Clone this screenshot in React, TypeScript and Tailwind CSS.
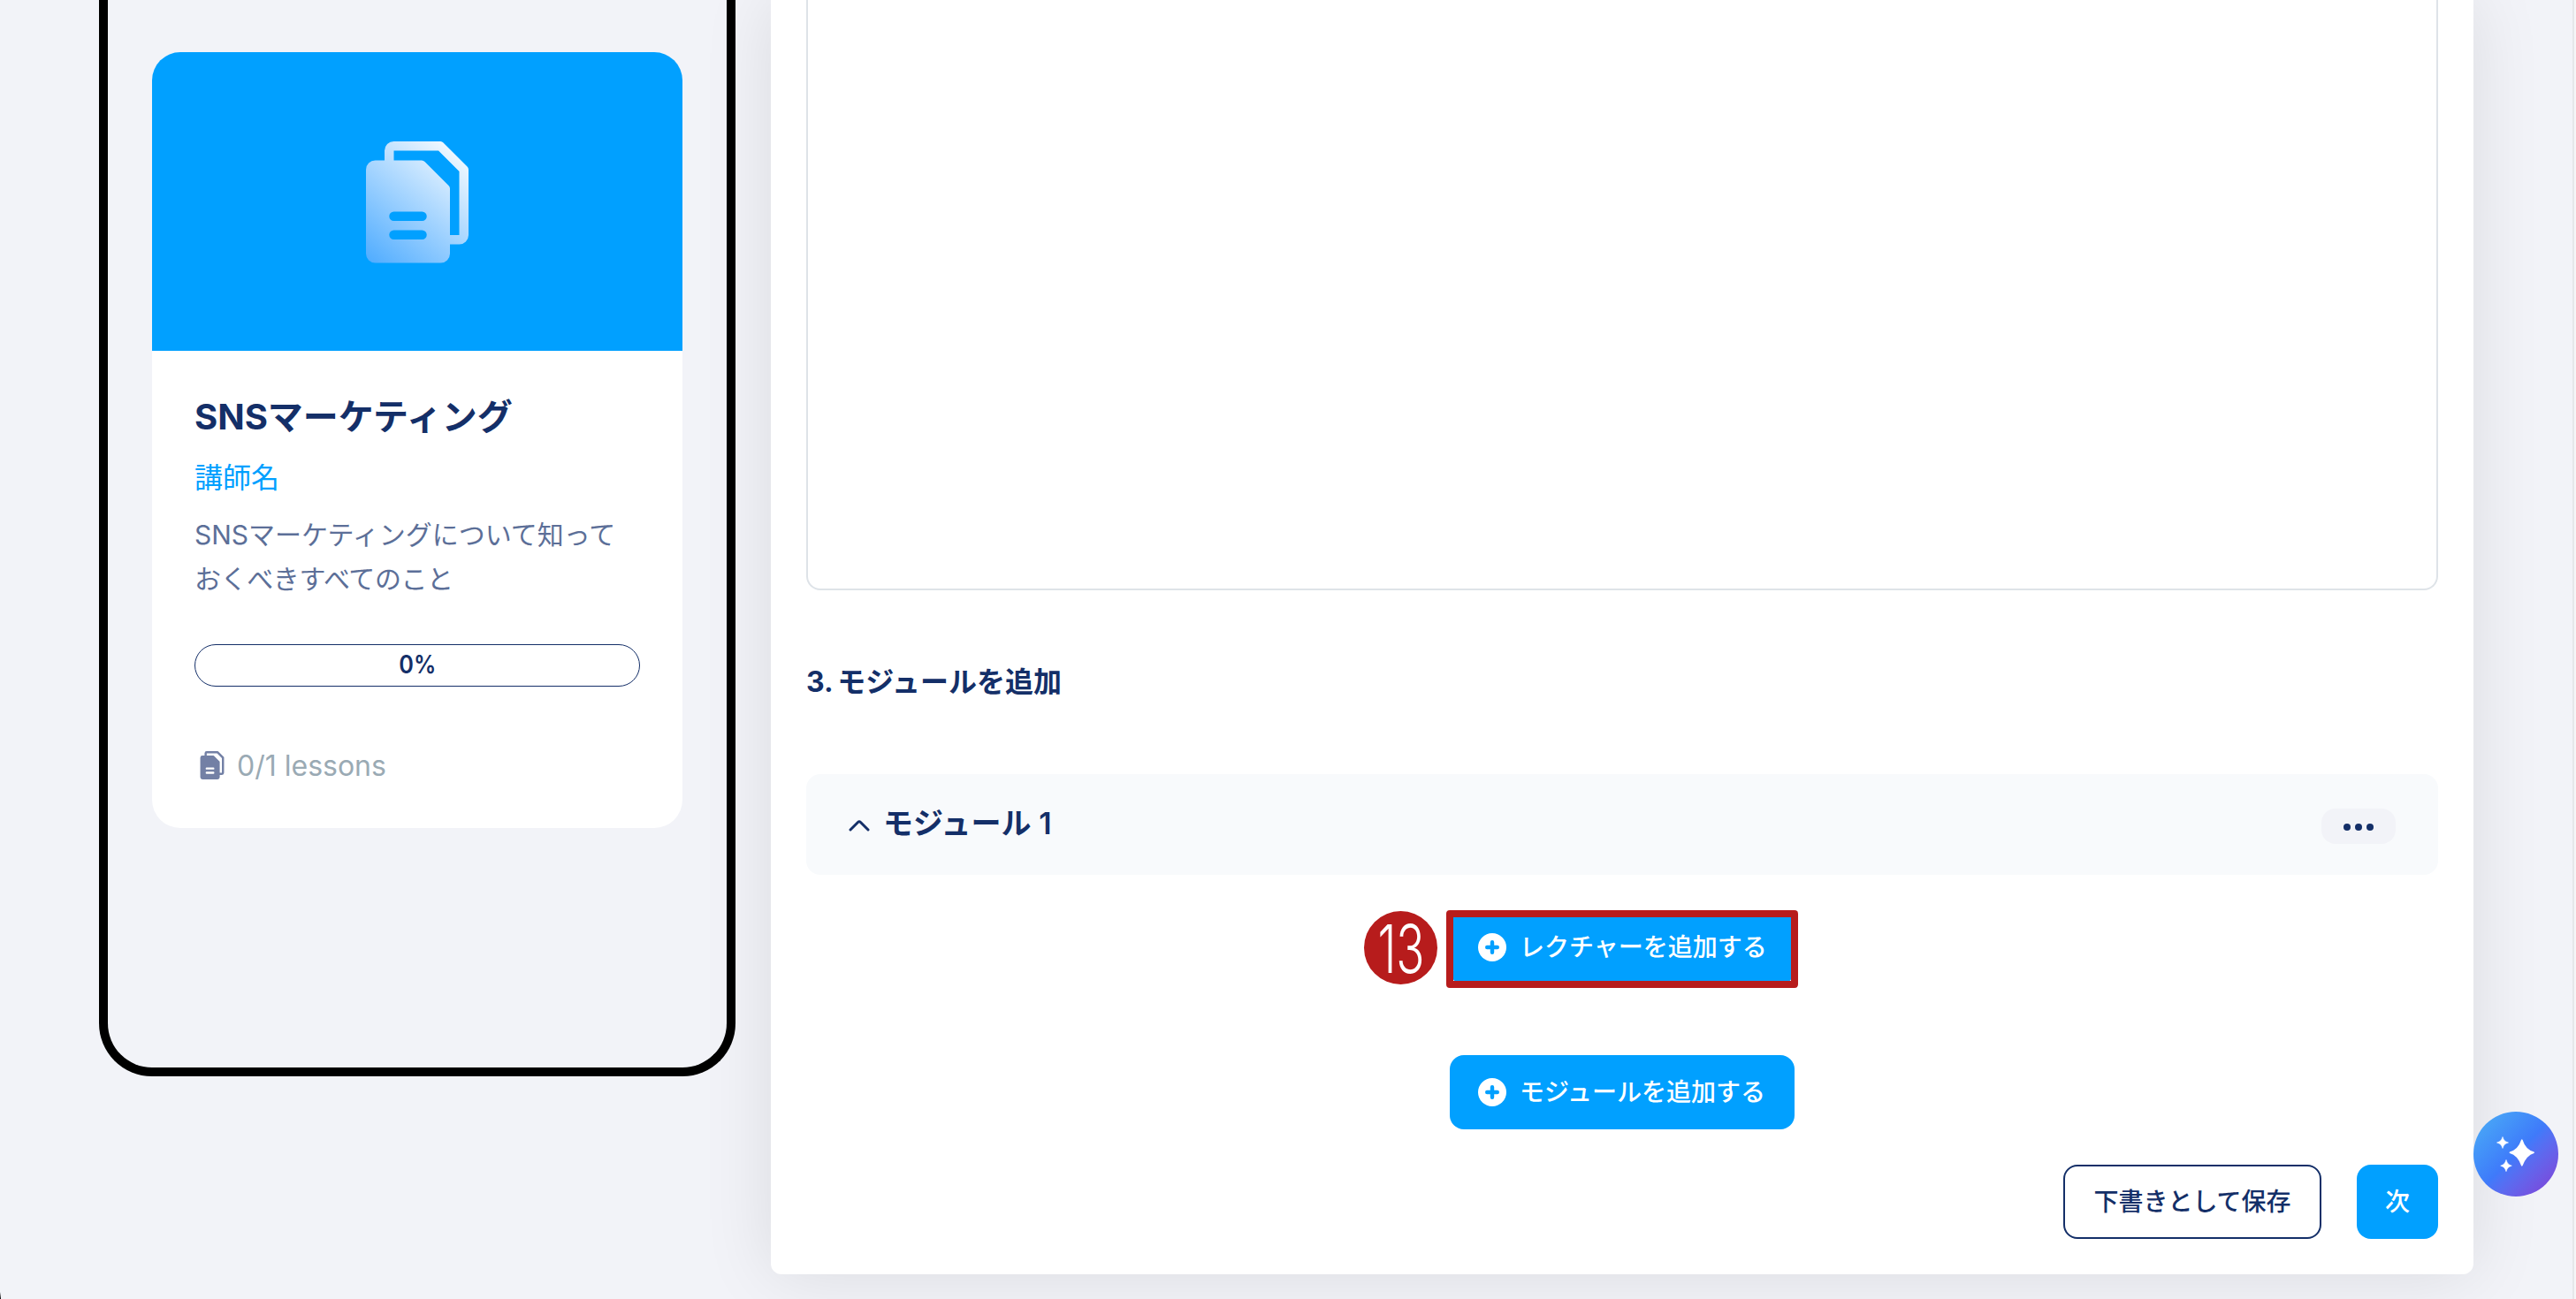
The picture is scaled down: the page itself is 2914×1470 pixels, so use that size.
import { clsx } from "clsx";

type IconProps = {
  className?: string;
};

const FilesIcon = ({ className, gradient }: IconProps & { gradient?: boolean }) => (
  <svg viewBox="0 0 116 138" className={className}>
    <defs>
      <linearGradient
        id="files"
        x1="0"
        y1="138"
        x2="104"
        y2="14"
        gradientUnits="userSpaceOnUse"
      >
        <stop stopColor="#4dabff" />
        <stop offset="1" stopColor="#f0f8ff" />
      </linearGradient>
    </defs>
    <path
      fill={gradient ? "url(#files)" : "currentColor"}
      fillRule="evenodd"
      d="M21 21.5V10.500A10.500 10.500 0 0 1 31.500 0H83.500A5 5 0 0 1 87.500 1.500L114.500 28.500A5 5 0 0 1 116 32V106A10.500 10.500 0 0 1 105.500 116.500H95V127A10.500 10.500 0 0 1 84.500 137.500H10.500A10.500 10.500 0 0 1 0 127V32A10.500 10.500 0 0 1 10.500 21.500ZM31.500 21.500H63A5 5 0 0 1 66.500 23L93.500 50A5 5 0 0 1 95 53.500V106H105.500V34L82 10.500H31.500ZM31.500 79.500A5.200 5.200 0 0 0 31.500 90H63.500A5.200 5.200 0 0 0 63.500 79.500ZM31.500 100.500A5.200 5.200 0 0 0 31.500 111H63.500A5.200 5.200 0 0 0 63.500 100.500Z"
    />
  </svg>
);

const PlusIcon = () => (
  <svg viewBox="0 0 32 32" className="size-8">
    <circle cx="16" cy="16" r="16" fill="#fff" />
    <path
      d="M16 10.200v11.600M10.200 16h11.600"
      stroke="#01a0ff"
      strokeWidth="4.4"
      strokeLinecap="round"
    />
  </svg>
);

const SparklesIcon = () => (
  <svg viewBox="0 0 96 96" fill="#fff" className="size-24">
    <path d="M54 32Q54.800 30.500 55.600 32Q59 43 68.500 45.500Q69.500 46.200 68.500 47Q60 49.500 55.600 61Q54.800 62.500 54 61Q50 49.500 41 47Q40 46.200 41 45.500Q50.500 43 54 32Z" />
    <path d="M33 28.500C34.200 32.500 35.500 33.800 39.500 35C35.500 36.200 34.200 37.500 33 41.500C31.800 37.500 30.500 36.200 26.500 35C30.500 33.800 31.800 32.500 33 28.500Z" stroke="#fff" strokeWidth="0.6" />
    <path d="M37 54.500C38.200 58.500 39.500 60 43.300 61.200C39.500 62.400 38.200 63.700 37 67.700C35.800 63.700 34.500 62.400 30.700 61.200C34.500 60 35.800 58.500 37 54.500Z" stroke="#fff" strokeWidth="0.6" />
  </svg>
);

const AddButton = ({ label, highlighted }: { label: string; highlighted?: boolean }) => (
  <button
    className={clsx(
      "relative flex h-[84px] w-[390px] items-center gap-[15px] rounded-2xl bg-[#01a0ff] pl-8 text-white",
      !highlighted && "mt-20"
    )}
  >
    <PlusIcon />
    <span className="-mt-px text-[28px] leading-10 font-medium whitespace-nowrap">
      {label}
    </span>
    {highlighted && (
      <>
        {/* Step marker */}
        <span className="absolute top-0 -left-1 h-[88px] w-[398px] rounded border-8 border-[#b71c1c]" />
        <span className="absolute top-px -left-[97px] flex size-[83px] items-center justify-center rounded-full bg-[#b71c1c]">
          <span className="scale-x-[0.7] text-[76px] leading-none font-light">
            13
          </span>
        </span>
      </>
    )}
  </button>
);

const CourseCard = () => (
  <div className="mt-[59px] h-[878px] w-[600px] overflow-hidden rounded-[32px] bg-white">
    <div className="flex h-[338px] items-start justify-center bg-[#01a0ff] pt-[100.5px]">
      <FilesIcon gradient className="h-[138px] w-[116px]" />
    </div>
    <div className="flex flex-col px-12">
      <h2 className="mt-[45px] text-[40px] leading-[60px] font-bold whitespace-nowrap">
        SNSマーケティング
      </h2>
      <p className="mt-[15px] text-[32px] leading-12 text-[#01a0ff]">講師名</p>
      <p className="mt-[15px] text-[30px] leading-[50px] whitespace-nowrap text-[#5c6f98]">
        SNSマーケティングについて知って
        <br />
        <span className="tracking-[-0.4px]">おくべきすべてのこと</span>
      </p>
      <div className="mt-[49px] flex h-12 items-center justify-center rounded-full border border-[#142f68] pb-[3px] text-[28px] font-semibold">
        <span className="scale-x-90">0%</span>
      </div>
      <div className="mt-16 flex items-center pl-[6px]">
        <FilesIcon className="h-8 w-7 text-[#7380a5]" />
        <span className="mt-0.5 ml-[14px] text-[32px] leading-12 text-[#9aaab4]">
          0/1 lessons
        </span>
      </div>
    </div>
  </div>
);

const App = () => {
  return (
    <div
      lang="ja"
      className="relative flex h-[1470px] w-[2914px] items-start overflow-hidden bg-[#f2f3f8] pl-28 font-[Inter,'Noto_Sans_CJK_JP',sans-serif] text-[#142f68]"
    >
      {/* Phone preview */}
      <div className="flex h-[1218px] w-[720px] shrink-0 justify-center rounded-b-[60px] border-x-10 border-b-10 border-black">
        <CourseCard />
      </div>

      {/* Course editor */}
      <main className="ml-10 flex h-[1442px] w-[1926px] shrink-0 flex-col rounded-b-xl bg-white px-10 shadow-[0_0_80px_rgba(0,0,0,0.1)]">
        <div className="h-[668px] rounded-b-2xl border-x-2 border-b-2 border-[#dee3e8]" />
        <h3 className="mt-[80px] text-[32px] leading-12 font-bold [word-spacing:-2px]">
          3. モジュールを追加
        </h3>
        <div className="mt-[80px] flex h-[114px] items-center justify-between rounded-2xl bg-[#f8fafc] pr-12 pl-[48px]">
          <div className="flex items-center">
            <svg
              viewBox="0 0 24 14"
              fill="none"
              stroke="currentColor"
              strokeWidth="3"
              strokeLinecap="round"
              strokeLinejoin="round"
              className="mt-px h-[14px] w-6"
            >
              <path d="M2 12L10.500 3.500Q12 2 13.500 3.500L22 12" />
            </svg>
            <span className="-mt-[3px] ml-[15px] text-[34px] leading-12 font-semibold">
              モジュール 1
            </span>
          </div>
          <button className="mt-1 flex h-10 w-[84px] items-center justify-center gap-[5px] rounded-2xl bg-[#f2f3f8] pt-0.5">
            <span className="size-2 rounded-full bg-[#142f68]" />
            <span className="size-2 rounded-full bg-[#142f68]" />
            <span className="size-2 rounded-full bg-[#142f68]" />
          </button>
        </div>

        <div className="mt-10 flex flex-col items-center">
          <AddButton label="レクチャーを追加する" highlighted />
          <AddButton label="モジュールを追加する" />
        </div>

        <div className="mt-10 flex justify-end gap-10">
          <button className="h-[84px] w-[292px] rounded-2xl border-2 border-[#142f68] text-[28px] font-medium">
            下書きとして保存
          </button>
          <button className="h-[84px] w-[92px] rounded-2xl bg-[#01a0ff] text-[28px] font-medium text-white">
            次
          </button>
        </div>
      </main>

      {/* Assistant button */}
      <button className="absolute top-[1258px] left-[2798px] size-24 rounded-full bg-linear-135 from-[#4db0f5] via-[#3f7afa] via-50% to-[#8039d4]">
        <SparklesIcon />
      </button>

      <span className="absolute top-0 right-0 h-full w-1 border-l-2 border-[#e6e7ea] bg-[#f6f6f8]" />
      <span className="absolute bottom-0 left-0 h-2 w-px bg-linear-to-t from-black to-transparent" />
    </div>
  );
};

export default App;
